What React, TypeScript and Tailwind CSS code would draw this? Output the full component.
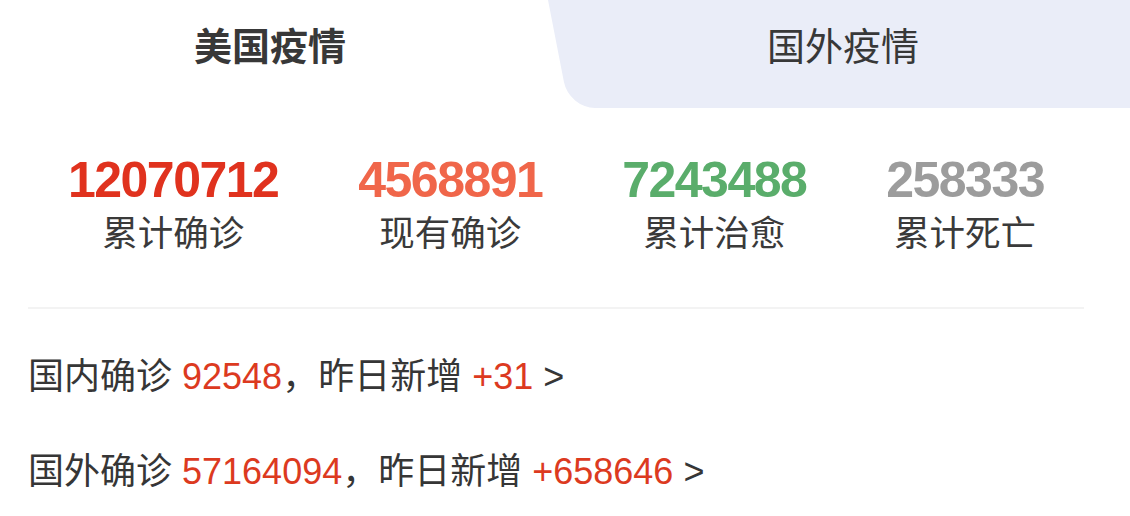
const stats = [
  { value: '12070712', label: '累计确诊', color: 'text-[#e0321e]' },
  { value: '4568891', label: '现有确诊', color: 'text-[#f0664a]' },
  { value: '7243488', label: '累计治愈', color: 'text-[#5aad6b]' },
  { value: '258333', label: '累计死亡', color: 'text-[#9c9c9c]' },
];

const rows = [
  { name: '国内确诊', total: '92548', added: '+31' },
  { name: '国外确诊', total: '57164094', added: '+658646' },
];

export default function App() {
  return (
    <div
      className="w-[1130px] h-[516px] overflow-hidden bg-white text-[#363636]"
      style={{ fontFamily: '"Liberation Sans", "Noto Sans CJK SC", sans-serif' }}
    >
      {/* tabs */}
      <div className="flex h-[108px] overflow-hidden">
        <div className="w-[540px] pt-[24px] text-center text-[38px] leading-[46px] font-bold text-[#383838]">
          美国疫情
        </div>
        <div className="relative flex-1 pl-4 pt-[24px] text-center text-[38px] leading-[46px] text-[#383838]">
          <div className="absolute left-[8px] top-0 h-[108px] w-[640px] origin-top skew-x-[11deg] rounded-bl-[26px] bg-[#eaedf8]" />
          <span className="relative">国外疫情</span>
        </div>
      </div>

      {/* stats */}
      <div className="pl-[28px] pr-[46px]">
        <div className="flex justify-around pt-[47px] pb-[55px]">
          {stats.map((s) => (
            <div key={s.label} className="flex flex-col items-center gap-[11px]">
              <div className={`text-[50px] leading-[50px] font-bold tracking-[-1.5px] ${s.color}`}>
                {s.value}
              </div>
              <div className="text-[35.5px] leading-[36px] text-[#3a3a3a]">{s.label}</div>
            </div>
          ))}
        </div>
        <div className="h-[2px] bg-[#f3f3f3]" />

        <div className="flex flex-col gap-[59px] pt-[50px] text-[36px] leading-[36px] text-[#363636]">
          {rows.map((r) => (
            <div key={r.name} className="whitespace-nowrap">
              {r.name} <span className="text-[#dc3a1f]">{r.total}</span>，昨日新增{' '}
              <span className="text-[#dc3a1f]">{r.added}</span> &gt;
            </div>
          ))}
        </div>
      </div>
    </div>
  );
}
